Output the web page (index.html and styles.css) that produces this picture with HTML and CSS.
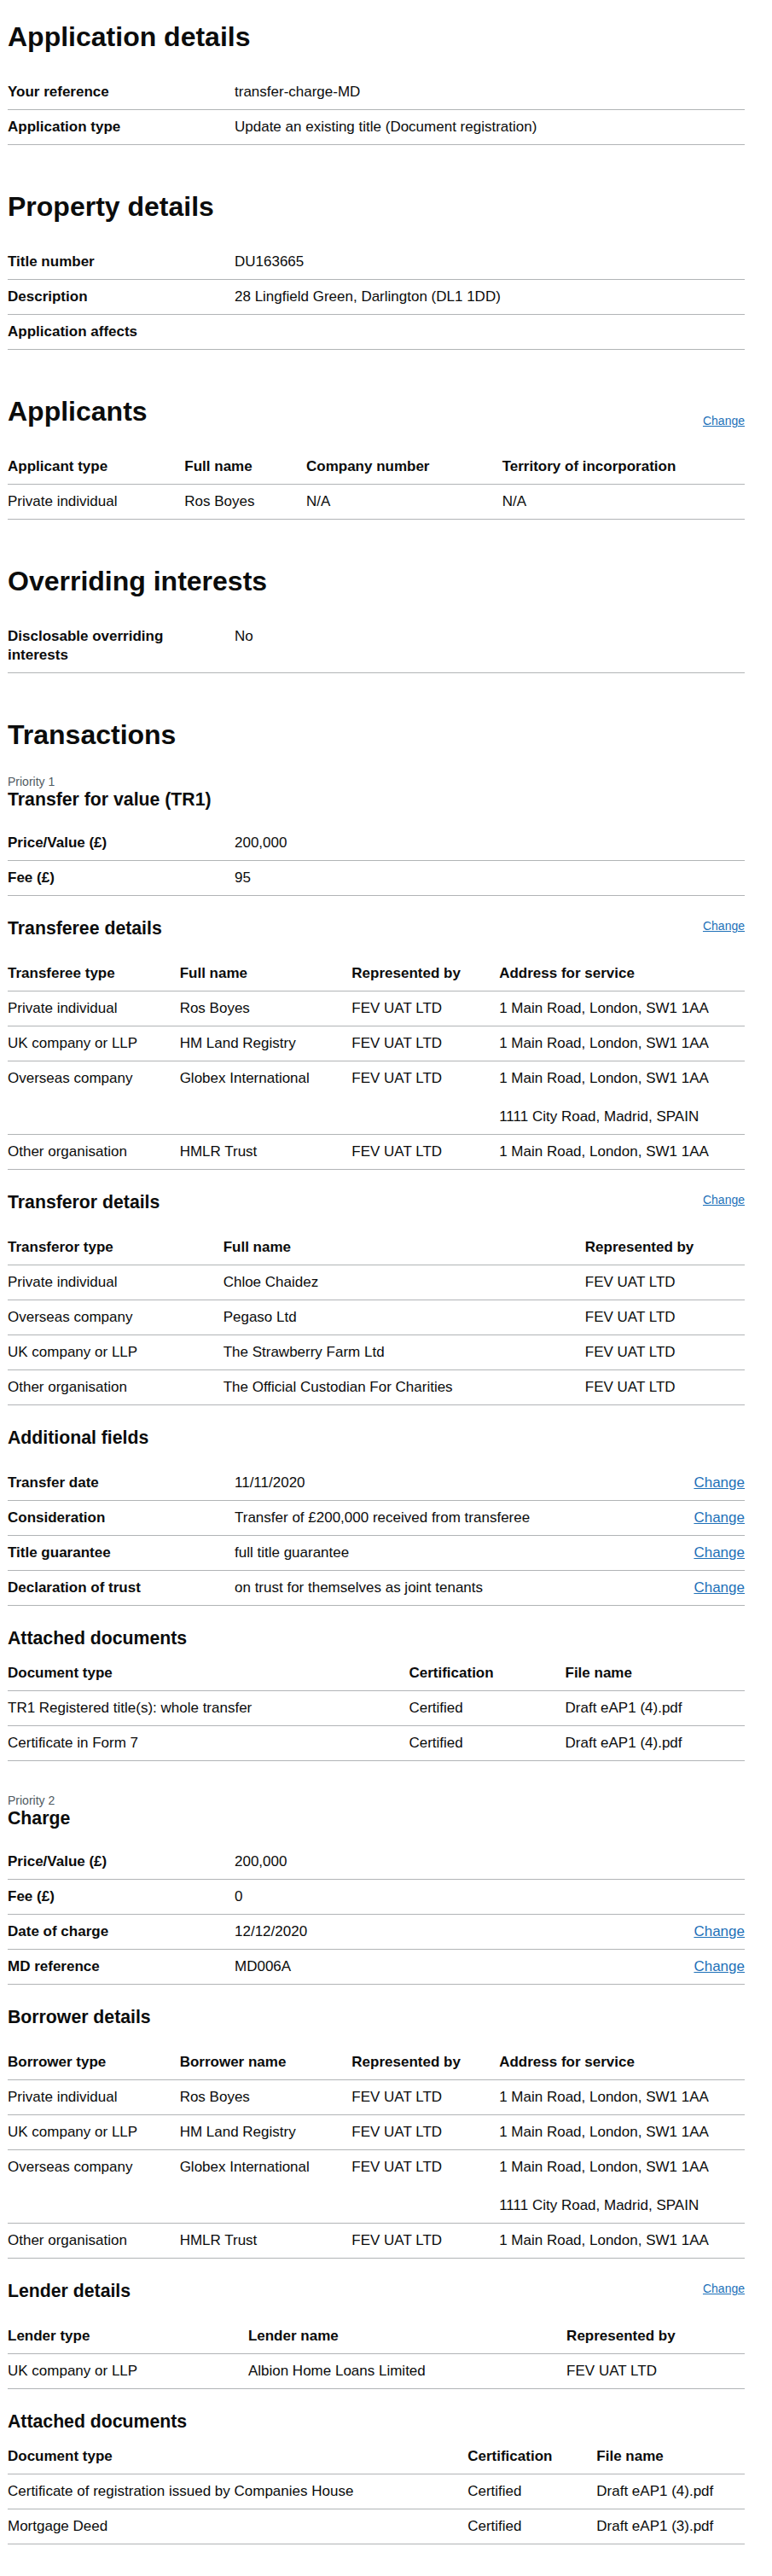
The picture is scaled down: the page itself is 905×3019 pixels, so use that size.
FILE: index.html
```html
<!DOCTYPE html>
<html lang="en">
<head>
<meta charset="utf-8">
<title>Application details</title>
<link rel="stylesheet" href="styles.css">
</head>
<body>
<main class="page">

  <section class="section">
    <h1 class="h1">Application details</h1>
    <dl class="summary">
      <div class="summary-row"><dt class="key">Your reference</dt><dd class="value">transfer-charge-MD</dd></div>
      <div class="summary-row"><dt class="key">Application type</dt><dd class="value">Update an existing title (Document registration)</dd></div>
    </dl>
  </section>

  <section class="section">
    <h1 class="h1">Property details</h1>
    <dl class="summary">
      <div class="summary-row"><dt class="key">Title number</dt><dd class="value">DU163665</dd></div>
      <div class="summary-row"><dt class="key">Description</dt><dd class="value">28 Lingfield Green, Darlington (DL1 1DD)</dd></div>
      <div class="summary-row"><dt class="key">Application affects</dt><dd class="value"></dd></div>
    </dl>
  </section>

  <section class="section">
    <div class="head-row head-row--h1">
      <h1 class="h1 h1--inline">Applicants</h1>
      <a class="head-link" href="#">Change</a>
    </div>
    <table class="table">
      <thead><tr><th>Applicant type</th><th>Full name</th><th>Company number</th><th>Territory of incorporation</th></tr></thead>
      <tbody><tr><td>Private individual</td><td>Ros Boyes</td><td>N/A</td><td>N/A</td></tr></tbody>
    </table>
  </section>

  <section class="section">
    <h1 class="h1">Overriding interests</h1>
    <dl class="summary">
      <div class="summary-row"><dt class="key">Disclosable overriding interests</dt><dd class="value">No</dd></div>
    </dl>
  </section>

  <section class="section">
    <h1 class="h1">Transactions</h1>

    <div class="transaction">
      <p class="caption">Priority 1</p>
      <h2 class="h2">Transfer for value (TR1)</h2>
      <dl class="summary">
        <div class="summary-row"><dt class="key">Price/Value (£)</dt><dd class="value">200,000</dd></div>
        <div class="summary-row"><dt class="key">Fee (£)</dt><dd class="value">95</dd></div>
      </dl>

      <div class="head-row">
        <h3 class="h3">Transferee details</h3>
        <a class="head-link" href="#">Change</a>
      </div>
      <table class="table">
        <thead><tr><th>Transferee type</th><th>Full name</th><th>Represented by</th><th>Address for service</th></tr></thead>
        <tbody>
          <tr><td>Private individual</td><td>Ros Boyes</td><td>FEV UAT LTD</td><td><p class="addr">1 Main Road, London, SW1 1AA</p></td></tr>
          <tr><td>UK company or LLP</td><td>HM Land Registry</td><td>FEV UAT LTD</td><td><p class="addr">1 Main Road, London, SW1 1AA</p></td></tr>
          <tr><td>Overseas company</td><td>Globex International</td><td>FEV UAT LTD</td><td><p class="addr">1 Main Road, London, SW1 1AA</p><p class="addr">1111 City Road, Madrid, SPAIN</p></td></tr>
          <tr><td>Other organisation</td><td>HMLR Trust</td><td>FEV UAT LTD</td><td><p class="addr">1 Main Road, London, SW1 1AA</p></td></tr>
        </tbody>
      </table>

      <div class="head-row">
        <h3 class="h3">Transferor details</h3>
        <a class="head-link" href="#">Change</a>
      </div>
      <table class="table">
        <thead><tr><th>Transferor type</th><th>Full name</th><th>Represented by</th></tr></thead>
        <tbody>
          <tr><td>Private individual</td><td>Chloe Chaidez</td><td>FEV UAT LTD</td></tr>
          <tr><td>Overseas company</td><td>Pegaso Ltd</td><td>FEV UAT LTD</td></tr>
          <tr><td>UK company or LLP</td><td>The Strawberry Farm Ltd</td><td>FEV UAT LTD</td></tr>
          <tr><td>Other organisation</td><td>The Official Custodian For Charities</td><td>FEV UAT LTD</td></tr>
        </tbody>
      </table>

      <div class="head-row">
        <h3 class="h3">Additional fields</h3>
      </div>
      <dl class="summary">
        <div class="summary-row"><dt class="key">Transfer date</dt><dd class="value">11/11/2020</dd><dd class="action"><a href="#">Change</a></dd></div>
        <div class="summary-row"><dt class="key">Consideration</dt><dd class="value">Transfer of £200,000 received from transferee</dd><dd class="action"><a href="#">Change</a></dd></div>
        <div class="summary-row"><dt class="key">Title guarantee</dt><dd class="value">full title guarantee</dd><dd class="action"><a href="#">Change</a></dd></div>
        <div class="summary-row"><dt class="key">Declaration of trust</dt><dd class="value">on trust for themselves as joint tenants</dd><dd class="action"><a href="#">Change</a></dd></div>
      </dl>

      <div class="head-row head-row--tight">
        <h3 class="h3">Attached documents</h3>
      </div>
      <table class="table">
        <thead><tr><th>Document type</th><th>Certification</th><th>File name</th></tr></thead>
        <tbody>
          <tr><td>TR1 Registered title(s): whole transfer</td><td>Certified</td><td>Draft eAP1 (4).pdf</td></tr>
          <tr><td>Certificate in Form 7</td><td>Certified</td><td>Draft eAP1 (4).pdf</td></tr>
        </tbody>
      </table>
    </div>

    <div class="transaction transaction--next">
      <p class="caption">Priority 2</p>
      <h2 class="h2">Charge</h2>
      <dl class="summary">
        <div class="summary-row"><dt class="key">Price/Value (£)</dt><dd class="value">200,000</dd></div>
        <div class="summary-row"><dt class="key">Fee (£)</dt><dd class="value">0</dd></div>
        <div class="summary-row"><dt class="key">Date of charge</dt><dd class="value">12/12/2020</dd><dd class="action"><a href="#">Change</a></dd></div>
        <div class="summary-row"><dt class="key">MD reference</dt><dd class="value">MD006A</dd><dd class="action"><a href="#">Change</a></dd></div>
      </dl>

      <div class="head-row">
        <h3 class="h3">Borrower details</h3>
      </div>
      <table class="table">
        <thead><tr><th>Borrower type</th><th>Borrower name</th><th>Represented by</th><th>Address for service</th></tr></thead>
        <tbody>
          <tr><td>Private individual</td><td>Ros Boyes</td><td>FEV UAT LTD</td><td><p class="addr">1 Main Road, London, SW1 1AA</p></td></tr>
          <tr><td>UK company or LLP</td><td>HM Land Registry</td><td>FEV UAT LTD</td><td><p class="addr">1 Main Road, London, SW1 1AA</p></td></tr>
          <tr><td>Overseas company</td><td>Globex International</td><td>FEV UAT LTD</td><td><p class="addr">1 Main Road, London, SW1 1AA</p><p class="addr">1111 City Road, Madrid, SPAIN</p></td></tr>
          <tr><td>Other organisation</td><td>HMLR Trust</td><td>FEV UAT LTD</td><td><p class="addr">1 Main Road, London, SW1 1AA</p></td></tr>
        </tbody>
      </table>

      <div class="head-row">
        <h3 class="h3">Lender details</h3>
        <a class="head-link" href="#">Change</a>
      </div>
      <table class="table">
        <thead><tr><th>Lender type</th><th>Lender name</th><th>Represented by</th></tr></thead>
        <tbody>
          <tr><td>UK company or LLP</td><td>Albion Home Loans Limited</td><td>FEV UAT LTD</td></tr>
        </tbody>
      </table>

      <div class="head-row head-row--tight">
        <h3 class="h3">Attached documents</h3>
      </div>
      <table class="table">
        <thead><tr><th>Document type</th><th>Certification</th><th>File name</th></tr></thead>
        <tbody>
          <tr><td>Certificate of registration issued by Companies House</td><td>Certified</td><td>Draft eAP1 (4).pdf</td></tr>
          <tr><td>Mortgage Deed</td><td>Certified</td><td>Draft eAP1 (3).pdf</td></tr>
        </tbody>
      </table>
    </div>
  </section>

</main>
</body>
</html>
```

FILE: styles.css
```css
* {
  box-sizing: border-box;
}

html,
body {
  margin: 0;
  padding: 0;
  background: #ffffff;
}

body {
  font-family: "Liberation Sans", Arial, Helvetica, sans-serif;
  font-size: 17px;
  line-height: 22px;
  color: #0b0c0c;
}

.page {
  margin: 0 32px 0 9px;
  padding: 23px 0 41px;
}

.section + .section {
  margin-top: 52px;
}

.h1 {
  margin: 0 0 25px;
  font-size: 32px;
  line-height: 40px;
  font-weight: 700;
}

.h1--inline {
  margin: 0;
}

.h2 {
  margin: 0 0 20px;
  font-size: 21.25px;
  line-height: 22px;
  font-weight: 700;
}

.h3 {
  margin: 0;
  font-size: 21.25px;
  line-height: 25px;
  font-weight: 700;
}

.caption {
  margin: 0;
  font-size: 14px;
  line-height: 20px;
  color: #505a5f;
}

.transaction--next {
  margin-top: 36px;
}

.head-row {
  display: flex;
  justify-content: space-between;
  align-items: flex-start;
  margin: 26px 0 20px;
}

.head-row--h1 {
  align-items: flex-end;
  margin: 0 0 25px;
}

.head-row--tight {
  margin-bottom: 8px;
}

.head-link {
  font-size: 14px;
  line-height: 18px;
  color: #1d70b8;
  text-decoration: underline;
}

.summary {
  margin: 0;
}

.summary-row {
  display: flex;
  padding: 9px 0;
  border-bottom: 1px solid #b1b4b6;
}

.key {
  flex: 0 0 266px;
  padding-right: 20px;
  font-weight: 700;
}

.value {
  flex: 1 1 auto;
  margin: 0;
}

.action {
  flex: 0 0 auto;
  margin: 0;
  text-align: right;
}

.action a {
  color: #1d70b8;
  text-decoration: underline;
}

.table {
  width: 100%;
  border-collapse: collapse;
  border-spacing: 0;
}

.table th,
.table td {
  padding: 9px 20px 9px 0;
  text-align: left;
  vertical-align: top;
  border-bottom: 1px solid #b1b4b6;
  font-size: 17px;
  line-height: 22px;
}

.table th {
  font-weight: 700;
}

.table th:last-child,
.table td:last-child {
  padding-right: 0;
}

.addr {
  margin: 0;
}

.addr + .addr {
  margin-top: 23px;
}
```
